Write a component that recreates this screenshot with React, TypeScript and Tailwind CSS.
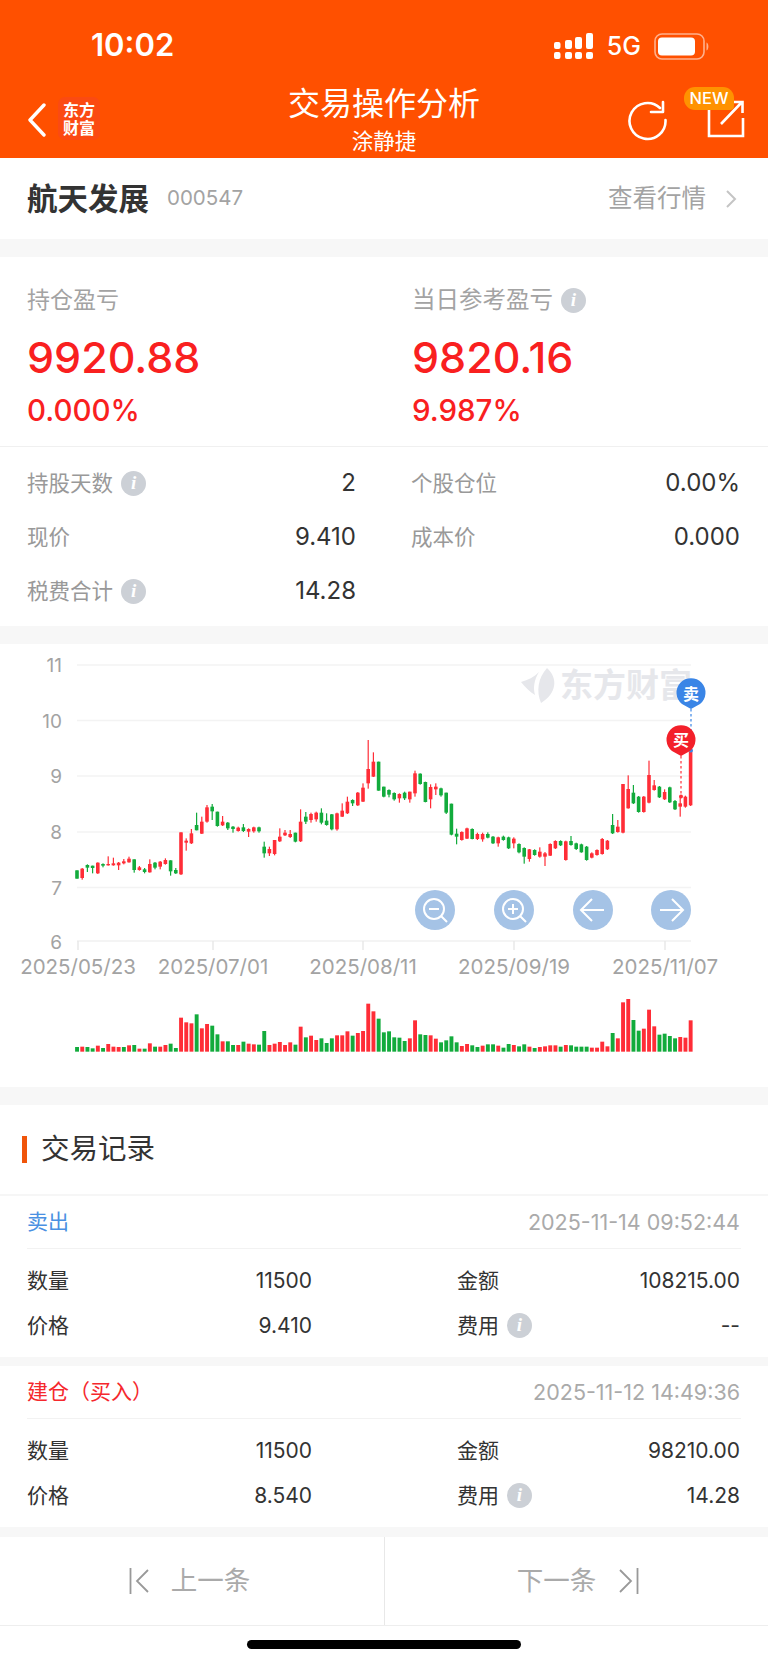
type Candle = ['r' | 'g', number, number, number, number];

const RED = '#ff2d37';
const GREEN = '#12ab3c';

// body top, body bottom, wick top, wick bottom, read off the reference
const candles: Candle[] = [
  ['g', 691, 716, 691, 716], ['r', 686, 714, 684, 719], ['g', 675, 683, 673, 696], ['g', 677, 684, 677, 700],
  ['r', 668, 700, 667, 702], ['g', 672, 677, 670, 682], ['r', 672, 676, 649, 677], ['r', 670, 676, 653, 677],
  ['r', 668, 676, 666, 690], ['r', 664, 670, 657, 673], ['r', 656, 667, 650, 668], ['g', 658, 690, 658, 698],
  ['r', 682, 690, 678, 692], ['g', 688, 696, 684, 700], ['r', 672, 697, 658, 698], ['g', 668, 683, 666, 688],
  ['r', 665, 680, 663, 688], ['r', 660, 672, 655, 674], ['g', 661, 694, 661, 707], ['g', 690, 700, 684, 702],
  ['r', 577, 703, 577, 705], ['r', 602, 608, 595, 632], ['r', 580, 610, 567, 612], ['g', 555, 571, 518, 571],
  ['r', 545, 581, 530, 582], ['r', 502, 545, 495, 548], ['g', 500, 514, 492, 540], ['g', 515, 558, 515, 560],
  ['r', 545, 556, 528, 558], ['g', 548, 565, 546, 570], ['g', 560, 567, 558, 578], ['r', 563, 573, 560, 575],
  ['g', 562, 573, 552, 576], ['r', 567, 575, 565, 591], ['r', 562, 574, 560, 578], ['g', 562, 574, 560, 578],
  ['g', 620, 640, 605, 653], ['r', 627, 640, 620, 648], ['r', 600, 642, 600, 646], ['r', 590, 604, 565, 606],
  ['r', 578, 586, 570, 588], ['r', 582, 591, 570, 594], ['g', 578, 605, 578, 607], ['r', 545, 604, 508, 606],
  ['g', 530, 545, 516, 552], ['r', 522, 540, 518, 548], ['r', 518, 538, 515, 545], ['g', 518, 548, 505, 553],
  ['g', 542, 555, 520, 557], ['g', 523, 568, 522, 571], ['r', 520, 568, 518, 572], ['r', 512, 530, 490, 531],
  ['r', 485, 520, 470, 522], ['g', 480, 490, 478, 498], ['r', 458, 496, 456, 498], ['r', 443, 485, 430, 486],
  ['r', 387, 430, 300, 446], ['r', 365, 410, 337, 411], ['g', 365, 452, 365, 452], ['g', 440, 470, 440, 472],
  ['g', 450, 464, 448, 472], ['g', 459, 478, 457, 482], ['r', 462, 475, 460, 488], ['g', 458, 475, 455, 480],
  ['r', 455, 478, 455, 488], ['r', 400, 460, 392, 470], ['g', 401, 432, 400, 434], ['g', 426, 486, 425, 487],
  ['r', 441, 478, 433, 505], ['r', 440, 448, 430, 465], ['g', 445, 466, 443, 470], ['g', 458, 518, 458, 522],
  ['g', 491, 584, 491, 586], ['g', 581, 590, 566, 613], ['r', 576, 600, 574, 602], ['r', 565, 596, 563, 597],
  ['g', 567, 597, 565, 598], ['r', 582, 597, 578, 600], ['r', 582, 598, 578, 605], ['g', 582, 593, 577, 595],
  ['g', 590, 610, 588, 612], ['r', 592, 610, 590, 620], ['g', 590, 600, 587, 602], ['g', 592, 625, 590, 627],
  ['r', 596, 610, 592, 625], ['g', 612, 637, 610, 640], ['g', 624, 650, 622, 671], ['r', 628, 657, 627, 665],
  ['g', 630, 645, 628, 647], ['r', 635, 650, 622, 653], ['r', 640, 650, 636, 678], ['r', 612, 647, 610, 648],
  ['r', 603, 625, 601, 627], ['g', 603, 616, 601, 618], ['r', 604, 660, 602, 662], ['g', 603, 615, 588, 617],
  ['g', 610, 627, 608, 630], ['g', 613, 637, 611, 638], ['g', 620, 660, 618, 662], ['r', 640, 653, 637, 655],
  ['r', 630, 645, 628, 647], ['r', 597, 642, 594, 644], ['r', 602, 628, 600, 630], ['g', 555, 580, 522, 582],
  ['r', 560, 576, 540, 578], ['r', 432, 578, 432, 580], ['r', 447, 505, 406, 506], ['g', 458, 490, 435, 492],
  ['g', 470, 516, 468, 518], ['r', 470, 516, 468, 518], ['r', 405, 488, 362, 490], ['r', 436, 450, 420, 452],
  ['g', 440, 472, 438, 474], ['r', 456, 478, 448, 480], ['g', 442, 487, 440, 489], ['g', 483, 508, 480, 510],
  ['r', 490, 500, 468, 530], ['r', 470, 500, 467, 503], ['r', 334, 496, 334, 498],
];

const volumes: ['r' | 'g', number][] = [
  ['g', 441], ['r', 440], ['g', 441], ['g', 445], ['r', 437], ['g', 444], ['r', 432], ['r', 440], ['r', 441], ['g', 441],
  ['r', 436], ['g', 435], ['r', 446], ['g', 446], ['r', 430], ['g', 440], ['r', 440], ['r', 435], ['g', 431], ['g', 444],
  ['r', 353], ['r', 367], ['r', 370], ['g', 343], ['r', 385], ['r', 372], ['g', 377], ['g', 403], ['r', 424], ['g', 424],
  ['g', 435], ['r', 435], ['g', 425], ['r', 431], ['r', 433], ['g', 434], ['g', 393], ['r', 435], ['r', 431], ['r', 426],
  ['r', 435], ['r', 427], ['g', 434], ['r', 380], ['g', 412], ['r', 407], ['r', 420], ['g', 415], ['g', 429], ['g', 415],
  ['r', 406], ['r', 406], ['r', 394], ['g', 407], ['r', 399], ['r', 393], ['r', 311], ['r', 334], ['g', 356], ['g', 397],
  ['g', 394], ['g', 412], ['g', 413], ['g', 423], ['r', 415], ['r', 361], ['g', 403], ['g', 405], ['r', 406], ['r', 416],
  ['g', 427], ['g', 421], ['g', 409], ['g', 427], ['r', 438], ['r', 432], ['g', 436], ['g', 441], ['r', 437], ['g', 433],
  ['g', 433], ['r', 437], ['g', 443], ['g', 432], ['r', 435], ['g', 439], ['g', 433], ['r', 440], ['g', 444], ['r', 441],
  ['r', 439], ['r', 436], ['r', 436], ['g', 440], ['r', 435], ['g', 436], ['g', 440], ['g', 440], ['g', 440], ['r', 443],
  ['r', 443], ['r', 425], ['r', 439], ['g', 399], ['r', 415], ['r', 307], ['r', 297], ['g', 360], ['g', 392], ['r', 386],
  ['r', 329], ['r', 379], ['g', 404], ['g', 401], ['g', 408], ['g', 415], ['r', 411], ['r', 413], ['r', 361],
];

const priceLines: [string, number][] = [['11', 665], ['10', 720.5], ['9', 776], ['8', 832], ['7', 887.5]];
const dateTicks: [string, number][] = [
  ['2025/05/23', 78], ['2025/07/01', 213], ['2025/08/11', 363], ['2025/09/19', 514], ['2025/11/07', 665],
];

const InfoIcon = () => (
  <span className="ml-[8px] inline-flex h-[25px] w-[25px] items-center justify-center rounded-full bg-[#ccd0d6] font-['Liberation_Serif',serif] text-[19px] font-bold italic text-white">
    i
  </span>
);

function Chart() {
  return (
    <svg className="block h-[443px] w-[768px]" viewBox="0 644 768 443" fontFamily="Inter, sans-serif">
      {/* watermark */}
      <g fill="#e6e7eb">
        <path d="M547 668C558 678 557 693 541 703C536 691 538 678 547 668Z" />
        <path d="M539 672C534 680 533 688 535 695C530 692 525 687 521 682C528 680 534 677 539 672Z" />
      </g>
      <text x="560" y="697" fontSize="33" fontWeight="700" fill="#e6e7eb" fontFamily="'Noto Sans CJK SC', sans-serif">东方财富</text>

      {priceLines.map(([label, y]) => (
        <g key={label}>
          <line x1="77" x2="691" y1={y} y2={y} stroke="#f3f3f3" strokeWidth="1.5" />
          <text x="62" y={y + 7} textAnchor="end" fontSize="19" fill="#a3a3a3">{label}</text>
        </g>
      ))}
      <line x1="77" x2="691" y1="941" y2="941" stroke="#f0f0f0" strokeWidth="1.5" />
      <text x="62" y="949" textAnchor="end" fontSize="19" fill="#a3a3a3">6</text>
      {dateTicks.map(([label, x]) => (
        <g key={label}>
          <line x1={x} x2={x} y1="941" y2="950" stroke="#e8e8e8" strokeWidth="1.5" />
          <text x={x} y="974" textAnchor="middle" fontSize="20.5" fill="#a3a3a3">{label}</text>
        </g>
      ))}

      {candles.map(([c, bt, bb, wt, wb], i) => {
        const x = 77 + i * 5.2;
        const color = c === 'r' ? RED : GREEN;
        return (
          <g key={i} fill={color}>
            <rect x={x - 0.6} y={640 + wt / 3} width="1.2" height={(wb - wt) / 3} />
            <rect x={x - 1.8} y={640 + bt / 3} width="3.6" height={(bb - bt) / 3} />
          </g>
        );
      })}

      {volumes.map(([c, top], i) => (
        <rect
          key={i}
          x={75.1 + i * 5.2}
          y={900 + top / 3}
          width="3.9"
          height={(455 - top) / 3}
          fill={c === 'r' ? RED : GREEN}
        />
      ))}

      {/* zoom and pan buttons */}
      <g fill="#a5c3e6">
        <circle cx="435" cy="910" r="20" />
        <circle cx="514" cy="910" r="20" />
        <circle cx="593" cy="910" r="20" />
        <circle cx="671" cy="910" r="20" />
      </g>
      <g fill="none" stroke="#fff" strokeWidth="2">
        <circle cx="434" cy="909" r="10" />
        <path d="M429 909H439M441 916L447 922" />
        <circle cx="513" cy="909" r="10" />
        <path d="M508 909H518M513 904V914M520 916L526 922" />
        <path d="M604 910H582M592 899L581 910L592 921" />
        <path d="M660 910H682M672 899L683 910L672 921" />
      </g>

      {/* trade markers */}
      <line x1="691" x2="691" y1="709" y2="750" stroke="#3a85e6" strokeWidth="1.2" strokeDasharray="2.5 2.5" />
      <circle cx="691" cy="750.5" r="2" fill="#3a85e6" />
      <path d="M691 709L682 704A14.5 14.5 0 1 1 700 704Z" fill="#3a85e6" />
      <text x="691" y="700" textAnchor="middle" fontSize="16" fontWeight="700" fill="#fff" fontFamily="'Noto Sans CJK SC', sans-serif">卖</text>
      <line x1="681" x2="681" y1="756" y2="796" stroke={RED} strokeWidth="1.2" strokeDasharray="2.5 2.5" />
      <circle cx="681" cy="796.5" r="2" fill={RED} />
      <path d="M681 756L672 751A14.5 14.5 0 1 1 690 751Z" fill="#f3202a" />
      <text x="681" y="746" textAnchor="middle" fontSize="16" fontWeight="700" fill="#fff" fontFamily="'Noto Sans CJK SC', sans-serif">买</text>
    </svg>
  );
}

function StatLine({ label, value, info }: { label: string; value: string; info?: boolean }) {
  return (
    <div className="flex h-[54px] items-center justify-between pl-[27px] pr-[28px]">
      <span className="flex items-center text-[21.5px] text-[#999]">
        {label}
        {info && <InfoIcon />}
      </span>
      <span className="text-[24px] text-[#333]">{value}</span>
    </div>
  );
}

function RecordField({ label, value, info }: { label: string; value: string; info?: boolean }) {
  return (
    <div className="flex h-[45px] items-center justify-between">
      <span className="flex items-center text-[21px] text-[#333]">
        {label}
        {info && <InfoIcon />}
      </span>
      <span className="text-[21px] text-[#333]">{value}</span>
    </div>
  );
}

function TradeRecord(props: {
  action: string;
  actionClass: string;
  time: string;
  amount: string;
  price: string;
  cost: string;
  fee: string;
  topBorder?: boolean;
}) {
  return (
    <section className={`bg-white ${props.topBorder ? 'border-t-2 border-[#f6f6f6]' : ''}`}>
      <div className="ml-[27px] mr-[27px] flex h-[53px] items-center justify-between border-b border-[#f2f2f2] pr-px">
        <span className={`text-[21px] ${props.actionClass}`}>{props.action}</span>
        <span className="text-[21.5px] text-[#aaa]">{props.time}</span>
      </div>
      <div className="grid grid-cols-[285px_283px] gap-x-[145px] pb-[9px] pl-[27px] pr-[28px] pt-[9px]">
        <RecordField label="数量" value={props.amount} />
        <RecordField label="金额" value={props.cost} />
        <RecordField label="价格" value={props.price} />
        <RecordField label="费用" value={props.fee} info />
      </div>
    </section>
  );
}

export default function App() {
  return (
    <div className="h-[1662px] w-[768px] overflow-hidden bg-[#f7f7f7] [font-family:Inter,'Noto_Sans_CJK_SC',sans-serif]">
      <header className="h-[158px] bg-[#ff5000] text-white">
        {/* status bar */}
        <div className="flex h-[86px] items-start justify-between pl-[91px] pr-[57px] pt-[26px]">
          <span className="text-[31px] font-semibold leading-[38px]">10:02</span>
          <div className="flex items-center gap-[13px] pt-[5px]">
            <svg width="40" height="27" viewBox="0 0 40 27" fill="#fff">
              <rect x="0" y="9" width="6.5" height="7" rx="2" />
              <rect x="11" y="7" width="7" height="9" rx="2" />
              <rect x="21" y="4" width="7" height="12" rx="2" />
              <rect x="32" y="0" width="7" height="16" rx="2" />
              <rect x="0" y="19" width="6.5" height="7" rx="2" />
              <rect x="11" y="19" width="7" height="7" rx="2" />
              <rect x="21" y="19" width="7" height="7" rx="2" />
              <rect x="32" y="19" width="7" height="7" rx="2" />
            </svg>
            <span className="text-[25px] font-medium leading-[30px]">5G</span>
            <svg width="57" height="27" viewBox="0 0 57 27" fill="none">
              <rect x="1" y="1" width="49" height="25" rx="7" stroke="#fff" strokeOpacity="0.55" strokeWidth="1.6" />
              <rect x="4" y="4.5" width="37" height="18" rx="4" fill="#fff" />
              <path d="M52.5 9.5C55 10.5 55 16.5 52.5 17.5Z" fill="#fff" fillOpacity="0.55" />
            </svg>
          </div>
        </div>
        {/* nav */}
        <div className="grid h-[72px] grid-cols-[1fr_auto_1fr] items-start">
          <div className="flex items-start pl-[27px] pt-[11px]">
            <svg width="20" height="34" viewBox="0 0 20 34" fill="none" className="mt-[6px]">
              <path d="M17 2L3 17L17 32" stroke="#fff" strokeWidth="3.4" strokeLinecap="round" strokeLinejoin="round" />
            </svg>
            <div className="ml-[11px] flex h-[43px] w-[42px] flex-col items-center justify-center rounded-[7px] bg-[#fb4a12] text-[16px] font-bold leading-[18px]">
              <span>东方</span>
              <span>财富</span>
            </div>
          </div>
          <div className="flex flex-col items-center">
            <span className="text-[32px] leading-[36px]">交易操作分析</span>
            <span className="mt-[6px] text-[21.5px] leading-[26px]">涂静捷</span>
          </div>
          <div className="relative flex items-start justify-end gap-[38px] pr-[23px] pt-[13px]">
            <svg width="42" height="42" viewBox="0 0 42 42" fill="none">
              <path d="M33 9A18 18 0 1 0 38.5 21" stroke="#fff" strokeWidth="2.6" strokeLinecap="round" />
              <path d="M24 13H36V3" stroke="#fff" strokeWidth="2.6" fill="none" strokeLinecap="round" strokeLinejoin="round" />
            </svg>
            <svg width="38" height="40" viewBox="0 0 38 40" fill="none">
              <path d="M19 5H2V37H36V19" stroke="#fff" strokeWidth="2.6" />
              <path d="M14 25L35 3M24 3H35.5V14" stroke="#fff" strokeWidth="2.6" />
            </svg>
            <span className="absolute right-[34px] top-[1px] flex h-[23px] w-[50px] items-center justify-center rounded-t-[11px] rounded-bl-[11px] rounded-br-[4px] bg-[#ff9200] text-[16.5px] font-medium leading-none">
              NEW
            </span>
          </div>
        </div>
      </header>

      <div className="flex h-[81px] items-center justify-between bg-white pl-[27px] pr-[31px]">
        <div className="flex items-center">
          <span className="text-[30.5px] font-bold text-[#333]">航天发展</span>
          <span className="ml-[18px] text-[20.5px] text-[#a3a3a3]">000547</span>
        </div>
        <div className="flex items-center text-[#a3a3a3]">
          <span className="text-[24.5px]">查看行情</span>
          <svg width="12" height="18" viewBox="0 0 12 18" fill="none" stroke="#c4c4c4" strokeWidth="2" className="ml-[19px]">
            <path d="M2 1L10 9L2 17" />
          </svg>
        </div>
      </div>

      <section className="mt-[18px] border-b border-[#f0f0f0] bg-white">
        <div className="grid grid-cols-2 pb-[18px] pt-[29px]">
          <div className="pl-[27px]">
            <div className="h-[28px] text-[23px] leading-[28px] text-[#a3a3a3]">持仓盈亏</div>
            <div className="mt-[17px] h-[52px] text-[43px] font-medium leading-[52px] text-[#f9201f]">9920.88</div>
            <div className="mt-[9px] h-[36px] text-[29.5px] font-medium leading-[36px] text-[#f9201f]">0.000%</div>
          </div>
          <div className="pl-[28px]">
            <div className="flex h-[28px] items-center text-[23.5px] text-[#a3a3a3]">
              当日参考盈亏
              <InfoIcon />
            </div>
            <div className="mt-[17px] h-[52px] text-[43px] font-medium leading-[52px] text-[#f9201f]">9820.16</div>
            <div className="mt-[9px] h-[36px] text-[29.5px] font-medium leading-[36px] text-[#f9201f]">9.987%</div>
          </div>
        </div>
      </section>

      <section className="grid grid-cols-2 bg-white pb-[8px] pt-[9px]">
        <StatLine label="持股天数" value="2" info />
        <StatLine label="个股仓位" value="0.00%" />
        <StatLine label="现价" value="9.410" />
        <StatLine label="成本价" value="0.000" />
        <StatLine label="税费合计" value="14.28" info />
      </section>

      <section className="mt-[18px] bg-white">
        <Chart />
      </section>

      <section className="mt-[18px] bg-white">
        <div className="flex h-[89px] items-center pl-[22px]">
          <span className="h-[27px] w-[5px] bg-[#f0550a]" />
          <span className="ml-[14px] text-[28.5px] text-[#333]">交易记录</span>
        </div>
      </section>

      <TradeRecord
        topBorder
        action="卖出"
        actionClass="text-[#4a90e2]"
        time="2025-11-14 09:52:44"
        amount="11500"
        price="9.410"
        cost="108215.00"
        fee="--"
      />

      <div className="mt-[9px]">
        <TradeRecord
          action="建仓（买入）"
          actionClass="text-[#f5282d]"
          time="2025-11-12 14:49:36"
          amount="11500"
          price="8.540"
          cost="98210.00"
          fee="14.28"
        />
      </div>

      <div className="mt-[10px] bg-white">
        <div className="grid h-[89px] grid-cols-[385px_383px] border-b border-[#eeeeee] text-[26.5px] text-[#aaa]">
          <div className="flex items-center justify-center border-r border-[#e8e8e8] pr-[5px]">
            <svg width="20" height="26" viewBox="0 0 20 26" fill="none" stroke="#999" strokeWidth="1.8">
              <path d="M1.5 0V26M19 2L8 13L19 24" />
            </svg>
            <span className="ml-[22px]">上一条</span>
          </div>
          <div className="flex items-center justify-center pl-[3px]">
            <span className="mr-[23px]">下一条</span>
            <svg width="20" height="26" viewBox="0 0 20 26" fill="none" stroke="#999" strokeWidth="1.8">
              <path d="M18.5 0V26M1 2L12 13L1 24" />
            </svg>
          </div>
        </div>
        <div className="flex h-[37px] justify-center bg-white pt-[14px]">
          <span className="h-[9px] w-[274px] rounded-full bg-black" />
        </div>
      </div>
    </div>
  );
}
